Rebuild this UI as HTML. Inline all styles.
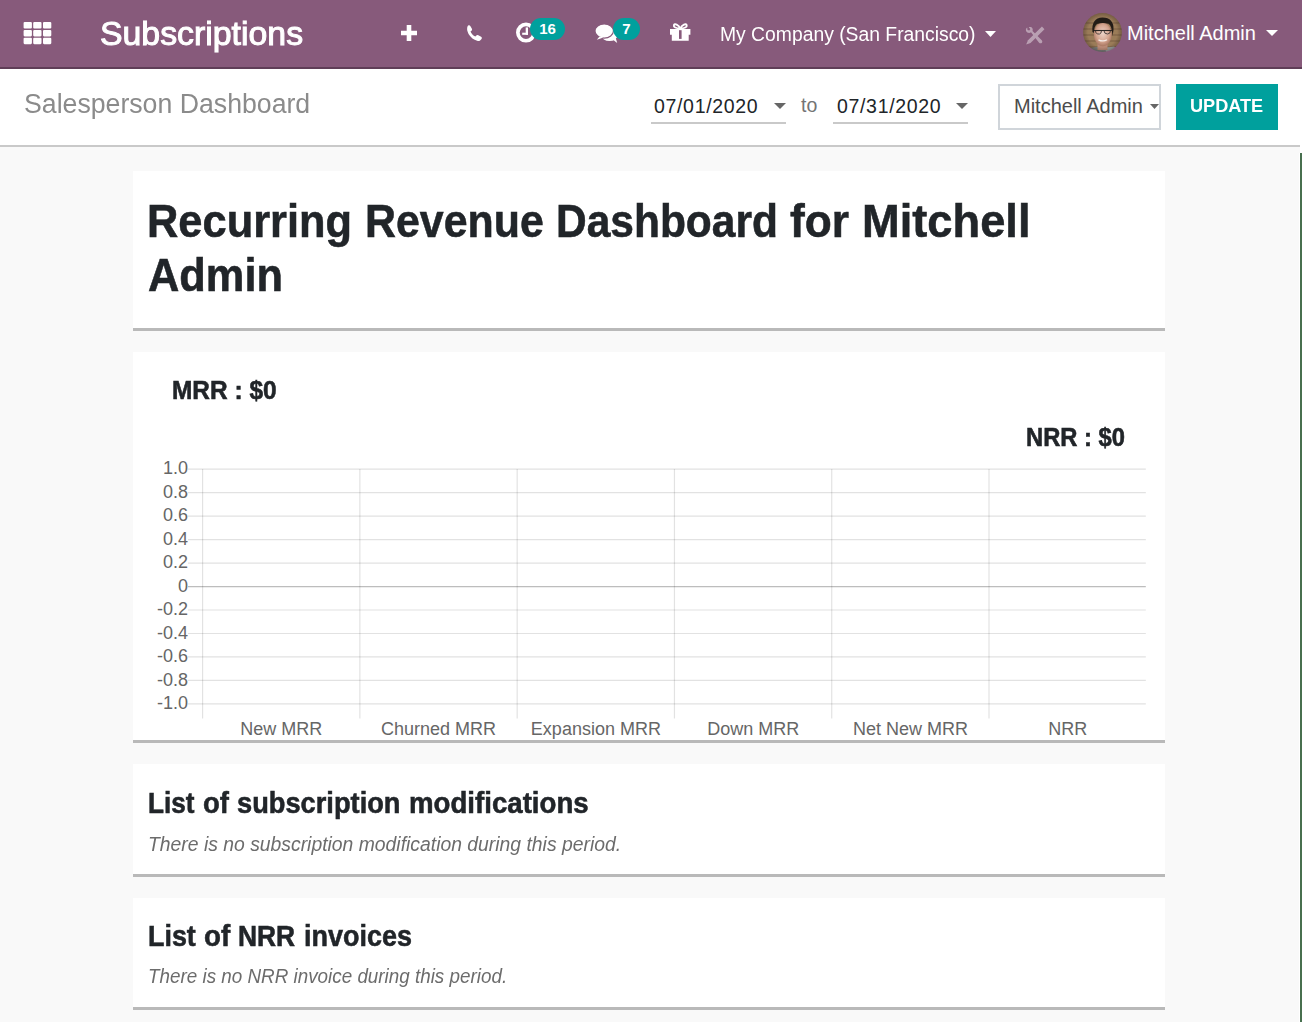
<!DOCTYPE html>
<html><head><meta charset="utf-8">
<style>
*{margin:0;padding:0;box-sizing:border-box}
html,body{width:1302px;height:1022px;overflow:hidden;background:#f9f9f9;font-family:"Liberation Sans",sans-serif}
.a{position:absolute;white-space:nowrap}
#nav{position:absolute;left:0;top:0;width:1302px;height:69px;background:#875A7B;border-bottom:2px solid #5f3e57}
#cp{position:absolute;left:0;top:69px;width:1300px;height:78px;background:#fff;border-bottom:2px solid #c9c9c9}
#cpr{position:absolute;left:1300px;top:69px;width:2px;height:84px;background:#fff}
#green{position:absolute;left:1300px;top:153px;width:2px;height:869px;background:#48704f}
#wcol{position:absolute;left:1299px;top:153px;width:1px;height:869px;background:#fff}
.card{position:absolute;left:133px;width:1032px;background:#fff;border-bottom:3px solid #b9b9b9}
.w{color:#fff}
.badge{position:absolute;height:22px;border-radius:11px;background:#00A09D;color:#fff;font-weight:bold;font-size:15px;line-height:22px;text-align:center}
.dk{color:#212529}
</style></head><body>
<div id="nav">
  <!-- grid icon -->
  <svg class="a" style="left:0;top:0" width="60" height="60" viewBox="0 0 60 60"><g fill="#fff"><rect x="23.6" y="22.0" width="8.3" height="6.5" rx="1.1"/><rect x="33.2" y="22.0" width="8.3" height="6.5" rx="1.1"/><rect x="43.0" y="22.0" width="8.3" height="6.5" rx="1.1"/><rect x="23.6" y="29.9" width="8.3" height="6.5" rx="1.1"/><rect x="33.2" y="29.9" width="8.3" height="6.5" rx="1.1"/><rect x="43.0" y="29.9" width="8.3" height="6.5" rx="1.1"/><rect x="23.6" y="37.7" width="8.3" height="6.5" rx="1.1"/><rect x="33.2" y="37.7" width="8.3" height="6.5" rx="1.1"/><rect x="43.0" y="37.7" width="8.3" height="6.5" rx="1.1"/></g></svg>
  <div class="a w" id="t_brand" style="transform:scaleX(1.025);transform-origin:0 0;left:100px;top:5px;font-size:33px;line-height:57px;-webkit-text-stroke:1px #fff">Subscriptions</div>
  <!-- plus -->
  <svg class="a" style="left:401px;top:25px" width="16" height="16" viewBox="0 0 16 16"><path d="M5.7 0h4.6v5.7H16v4.6h-5.7V16H5.7v-5.7H0V5.7h5.7z" fill="#fff"/></svg>
  <!-- phone -->
  <svg class="a" style="left:466px;top:25px" width="17" height="16" viewBox="0 0 17 16"><path d="M2.2 0.6C3 0 3.8 0.2 4.3 1l1.6 2.7c.4.7.2 1.5-.4 2l-1 .8c.9 2.3 2.6 4.1 4.9 5.1l.9-1c.5-.6 1.4-.8 2-.4l2.8 1.6c.8.5 1 1.3.4 2.1-.9 1.3-2.2 2.3-3.7 2-5-1-9.6-5.6-10.6-10.6C1 3 1.3 1.5 2.2.6z" fill="#fff"/></svg>
  <!-- clock -->
  <svg class="a" style="left:515px;top:22px" width="22" height="22" viewBox="0 0 22 22"><circle cx="11" cy="10.6" r="8.15" fill="none" stroke="#fff" stroke-width="3.7"/><rect x="10.7" y="5.4" width="2.3" height="7.4" fill="#fff"/><rect x="7.2" y="10.7" width="5.8" height="2.1" fill="#fff"/></svg>
  <div class="badge" style="left:530px;top:18px;width:35px">16</div>
  <!-- chat -->
  <svg class="a" style="left:595px;top:23px" width="25" height="21" viewBox="0 0 25 21"><ellipse cx="14.5" cy="12.3" rx="8" ry="5.8" fill="#fff"/><path d="M17 16 L22.2 20 L20.5 14z" fill="#fff"/><ellipse cx="9.2" cy="8" rx="9.2" ry="7.1" fill="#fff" stroke="#875A7B" stroke-width="1.1"/><path d="M4.5 13.5 L1.8 16.8 L8.5 14.6z" fill="#fff"/></svg>
  <div class="badge" style="left:613px;top:18px;width:27px">7</div>
  <!-- gift -->
  <svg class="a" style="left:669px;top:22px" width="23" height="20" viewBox="0 0 23 20"><path d="M1 6.9H21.4V12.7H19.7V18.8H2.8V12.7H1z" fill="#fff"/><rect x="10" y="8.2" width="2.6" height="8.7" fill="#875A7B"/><g fill="none" stroke="#fff" stroke-width="1.9"><path d="M11.3 6.5C9.5 2.5 5.5 1 4.9 3.2 4.4 5 7 6.5 11.3 6.5z"/><path d="M11.3 6.5C13.1 2.5 17.1 1 17.7 3.2 18.2 5 15.6 6.5 11.3 6.5z"/></g></svg>
  <div class="a w" id="t_company" style="transform:scaleX(0.966);transform-origin:0 0;left:720px;top:5.5px;font-size:20px;line-height:57px">My Company (San Francisco)</div>
  <svg class="a" style="left:985px;top:31px" width="11" height="6" viewBox="0 0 11 6"><path d="M0 0h11L5.5 6z" fill="#fff"/></svg>
  <!-- tools -->
  <svg class="a" style="left:1024px;top:25px" width="22" height="22" viewBox="0 0 22 22"><g fill="#fff" opacity="0.42"><path d="M17.94 1.62 L20.46 4.18 L6.51 17.88 L2.2 19.6 L3.99 15.32z"/><path d="M3.2 2.6 C1.6 3.6 1.3 6.2 3.3 7.4 C4.6 8.2 6.2 7.9 7 7.3 L14.9 17.4 C15.7 18.5 17.2 18.6 17.9 17.7 C18.6 16.9 18.4 15.9 17.5 15.1 L8.5 6 C9.2 4.6 8.4 2.6 6.7 2.1 C5.9 1.9 5.2 2 4.7 2.2 L6.3 3.9 L5.3 5.5 L3.5 5 z"/></g></svg>
  <!-- avatar -->
  <svg class="a" style="left:1083px;top:13px" width="39" height="39" viewBox="0 0 39 39">
    <defs><clipPath id="cc"><circle cx="19.5" cy="19.5" r="19.4"/></clipPath>
    <filter id="bl" filterUnits="userSpaceOnUse" x="-5" y="-5" width="49" height="49"><feGaussianBlur stdDeviation="0.55"/></filter>
    <radialGradient id="vig" cx="0.5" cy="0.5" r="0.5"><stop offset="0.6" stop-color="#000" stop-opacity="0"/><stop offset="1" stop-color="#2a1a10" stop-opacity="0.55"/></radialGradient>
    <radialGradient id="face" cx="0.5" cy="0.45" r="0.6"><stop offset="0" stop-color="#ecd3c8"/><stop offset="0.6" stop-color="#d4a48e"/><stop offset="1" stop-color="#9c6a55"/></radialGradient></defs>
    <g clip-path="url(#cc)"><g filter="url(#bl)">
      <rect x="-5" y="-5" width="49" height="49" fill="#9a7b58"/>
      <g stroke="#5e4632" stroke-width="1.1" opacity="0.55"><path d="M0 10H39M0 16H39M0 22H39M0 28H39M0 34H39"/></g>
      <path d="M-2 42 Q3 35 13 34 L26 34 Q35 35 40 42z" fill="#7b7c7a"/>
      <path d="M22 35 L31 33.5 Q36 36 38 42 L24 42z" fill="#9ea3a3"/>
      <rect x="14.5" y="30" width="10" height="7" fill="#b98a76"/>
      <ellipse cx="19.8" cy="21.5" rx="9" ry="11.8" fill="url(#face)"/>
      <path d="M9.5 19 Q8 5 19.5 4.5 Q31 4.5 30.5 17 L29.5 23 Q29 13 25.5 10.8 Q19.5 9 14 11 Q11 13.5 10.8 20z" fill="#231c19"/>
      <path d="M11 17.5 H29" stroke="#2a2524" stroke-width="1.1"/>
      <path d="M12.5 17.5 Q12.5 21.5 16.5 21 Q18.5 20.5 18.5 17.5 M21 17.5 Q21 21 24.5 21 Q27.5 21 27.5 17.5" stroke="#2f2a29" stroke-width="0.8" fill="none"/>
      <path d="M15.5 26.8 Q20 29 24 26.8" stroke="#f3ebe8" stroke-width="1.3" fill="none"/>
      <rect x="-5" y="-5" width="49" height="49" fill="url(#vig)"/>
    </g></g>
  </svg>
  <div class="a w" id="t_user" style="left:1127px;top:5px;font-size:20px;line-height:57px">Mitchell Admin</div>
  <svg class="a" style="left:1266px;top:30px" width="12" height="6" viewBox="0 0 12 6"><path d="M0 0h12L6 6z" fill="#fff"/></svg>
</div>

<div id="cp">
  <div class="a" id="t_bc" style="transform:scaleX(0.988);transform-origin:0 0;left:24px;top:14.7px;font-size:27px;line-height:40px;color:#8b8b8b">Salesperson Dashboard</div>
  <div class="a dk" id="t_d1" style="left:654px;top:22px;font-size:19.5px;letter-spacing:0.67px;line-height:30px">07/01/2020</div>
  <svg class="a" style="left:774px;top:34px" width="12" height="6" viewBox="0 0 12 6"><path d="M0 0h12L6 6z" fill="#666"/></svg>
  <div class="a" style="left:651px;top:53px;width:135px;height:2px;background:#c9c9c9"></div>
  <div class="a" id="t_to" style="left:801px;top:21px;font-size:19.5px;line-height:30px;color:#747474">to</div>
  <div class="a dk" id="t_d2" style="left:837px;top:22px;font-size:19.5px;letter-spacing:0.67px;line-height:30px">07/31/2020</div>
  <svg class="a" style="left:956px;top:34px" width="12" height="6" viewBox="0 0 12 6"><path d="M0 0h12L6 6z" fill="#666"/></svg>
  <div class="a" style="left:833px;top:53px;width:135px;height:2px;background:#c9c9c9"></div>
  <div class="a" style="left:998px;top:15px;width:163px;height:46px;border:2px solid #d0d5da;background:#fff"></div>
  <div class="a" id="t_sel" style="left:1014px;top:21.7px;font-size:20px;line-height:30px;color:#4c4c4c">Mitchell Admin</div>
  <svg class="a" style="left:1150.2px;top:35px" width="9" height="5" viewBox="0 0 9 5"><path d="M0 0h9L4.5 5z" fill="#666"/></svg>
  <div class="a" style="left:1176px;top:15px;width:102px;height:46px;background:#00A09D"></div>
  <div class="a w" id="t_upd" style="transform:scaleX(0.954);transform-origin:0 0;left:1190px;top:22px;font-size:19px;line-height:30px;font-weight:bold">UPDATE</div>
</div>
<div id="cpr"></div>
<div id="wcol"></div>
<div id="green"></div>

<!-- card 1 -->
<div class="card" style="top:171px;height:160px"></div>
<div class="a dk" style="-webkit-text-stroke:0.55px #212529;left:147.31px;top:194px;font-size:46px;line-height:54px;font-weight:bold;transform:scaleX(0.9437);transform-origin:0 0">Recurring</div>
<div class="a dk" style="-webkit-text-stroke:0.55px #212529;left:364.73px;top:194px;font-size:46px;line-height:54px;font-weight:bold;transform:scaleX(0.9328);transform-origin:0 0">Revenue</div>
<div class="a dk" style="-webkit-text-stroke:0.55px #212529;left:556.15px;top:194px;font-size:46px;line-height:54px;font-weight:bold;transform:scaleX(0.9237);transform-origin:0 0">Dashboard</div>
<div class="a dk" style="-webkit-text-stroke:0.55px #212529;left:790.30px;top:194px;font-size:46px;line-height:54px;font-weight:bold;transform:scaleX(0.9623);transform-origin:0 0">for</div>
<div class="a dk" style="-webkit-text-stroke:0.55px #212529;left:862.13px;top:194px;font-size:46px;line-height:54px;font-weight:bold;transform:scaleX(0.9838);transform-origin:0 0">Mitchell</div>
<div class="a dk" id="t_title2" style="-webkit-text-stroke:0.55px #212529;left:148.06px;top:248px;font-size:46px;line-height:54px;font-weight:bold;transform:scaleX(0.9429);transform-origin:0 0">Admin</div>

<!-- card 2 -->
<div class="card" style="top:352px;height:391px"></div>
<div class="a dk" id="t_mrr" style="-webkit-text-stroke:0.55px #212529;transform:scaleX(0.978);transform-origin:0 0;left:172px;top:374.6px;font-size:25px;line-height:30px;font-weight:bold">MRR : $0</div>
<div class="a dk" id="t_nrr" style="-webkit-text-stroke:0.55px #212529;transform:scaleX(0.95);transform-origin:0 0;left:1026px;top:421.6px;font-size:25px;line-height:30px;font-weight:bold">NRR : $0</div>
<svg class="a" style="left:133px;top:440px" width="1032" height="300" viewBox="133 440 1032 300" id="chart">
  <path d="M188 469.20H1145.8M188 492.67H1145.8M188 516.14H1145.8M188 539.61H1145.8M188 563.08H1145.8M188 610.02H1145.8M188 633.49H1145.8M188 656.96H1145.8M188 680.43H1145.8M188 703.90H1145.8" stroke="#e2e2e2" stroke-width="1.2" fill="none"/>
  <path d="M188 586.55H1145.8" stroke="#bdbdbd" stroke-width="1.2"/>
  <path d="M202.60 469V718.5M359.88 469V718.5M517.16 469V718.5M674.44 469V718.5M831.72 469V718.5M989.00 469V718.5" stroke="rgba(0,0,0,0.115)" stroke-width="1.2" fill="none"/>
  <g fill="#666" font-family="Liberation Sans" font-size="18" text-anchor="end"><text x="188" y="474.3">1.0</text><text x="188" y="497.8">0.8</text><text x="188" y="521.3">0.6</text><text x="188" y="544.8">0.4</text><text x="188" y="568.2">0.2</text><text x="188" y="591.7">0</text><text x="188" y="615.2">-0.2</text><text x="188" y="638.6">-0.4</text><text x="188" y="662.1">-0.6</text><text x="188" y="685.6">-0.8</text><text x="188" y="709.0">-1.0</text></g>
  <g fill="#666" font-family="Liberation Sans" font-size="18" text-anchor="middle"><text x="281.3" y="735">New MRR</text><text x="438.6" y="735">Churned MRR</text><text x="595.9" y="735">Expansion MRR</text><text x="753.2" y="735">Down MRR</text><text x="910.5" y="735">Net New MRR</text><text x="1067.7" y="735">NRR</text></g>
</svg>

<!-- card 3 -->
<div class="card" style="top:764px;height:113px"></div>
<div class="a dk" id="t_h3a" style="-webkit-text-stroke:0.55px #212529;left:148.10px;top:786px;font-size:29px;line-height:34px;font-weight:bold;transform:scaleX(0.9020);transform-origin:0 0">List</div>
<div class="a dk" style="-webkit-text-stroke:0.55px #212529;left:203.45px;top:786px;font-size:29px;line-height:34px;font-weight:bold;transform:scaleX(0.9481);transform-origin:0 0">of</div>
<div class="a dk" style="-webkit-text-stroke:0.55px #212529;left:237.46px;top:786px;font-size:29px;line-height:34px;font-weight:bold;transform:scaleX(0.9395);transform-origin:0 0">subscription</div>
<div class="a dk" style="-webkit-text-stroke:0.55px #212529;left:408.65px;top:786px;font-size:29px;line-height:34px;font-weight:bold;transform:scaleX(0.9529);transform-origin:0 0">modifications</div>
<div class="a" id="t_ia" style="transform:scaleX(0.992);transform-origin:0 0;left:148px;top:831px;font-size:19.5px;line-height:26px;font-style:italic;color:#6c6c6c">There is no subscription modification during this period.</div>

<!-- card 4 -->
<div class="card" style="top:898px;height:112px"></div>
<div class="a dk" id="t_h3b" style="-webkit-text-stroke:0.55px #212529;left:148.07px;top:919px;font-size:29px;line-height:34px;font-weight:bold;transform:scaleX(0.9275);transform-origin:0 0">List</div>
<div class="a dk" style="-webkit-text-stroke:0.55px #212529;left:203.54px;top:919px;font-size:29px;line-height:34px;font-weight:bold;transform:scaleX(0.9556);transform-origin:0 0">of</div>
<div class="a dk" style="-webkit-text-stroke:0.55px #212529;left:237.99px;top:919px;font-size:29px;line-height:34px;font-weight:bold;transform:scaleX(0.9097);transform-origin:0 0">NRR</div>
<div class="a dk" style="-webkit-text-stroke:0.55px #212529;left:303.57px;top:919px;font-size:29px;line-height:34px;font-weight:bold;transform:scaleX(0.9296);transform-origin:0 0">invoices</div>
<div class="a" id="t_ib" style="transform:scaleX(0.966);transform-origin:0 0;left:148px;top:962.5px;font-size:19.5px;line-height:26px;font-style:italic;color:#6c6c6c">There is no NRR invoice during this period.</div>
</body></html>
